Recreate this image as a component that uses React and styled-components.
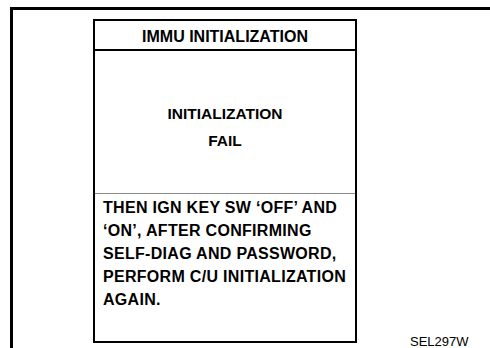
import React from "react";
import styled, { createGlobalStyle } from "styled-components";

const GlobalStyle = createGlobalStyle`
  html, body {
    margin: 0;
    padding: 0;
    background: #fff;
    overflow: hidden;
  }
  body {
    font-family: "Liberation Sans", Arial, sans-serif;
    color: #000;
  }
`;

const Frame = styled.div`
  box-sizing: border-box;
  margin: 7px 0 0 10px;
  height: 341px;
  border-top: 3px solid #000;
  border-left: 3px solid #000;
  display: flex;
  align-items: flex-start;
`;

const Screen = styled.div`
  box-sizing: border-box;
  margin: 9px 0 0 80px;
  width: 264px;
  height: 324px;
  border: 2px solid #000;
  display: flex;
  flex-direction: column;
`;

const Header = styled.div`
  height: 25px;
  padding-top: 3px;
  line-height: 25px;
  font-size: 16px;
  font-weight: bold;
  text-align: center;
  border-bottom: 2px solid #000;
`;

const Message = styled.div`
  box-sizing: border-box;
  height: 143px;
  padding-top: 49px;
  font-size: 15.5px;
  line-height: 27px;
  font-weight: bold;
  text-align: center;
  border-bottom: 1px solid #8a8a8a;
`;

const Instructions = styled.div`
  flex: 1;
  padding: 2px 0 0 8px;
  font-size: 16px;
  line-height: 23px;
  font-weight: bold;
  letter-spacing: 0.3px;
`;

const FigureCode = styled.div`
  align-self: flex-end;
  margin: 0 0 0 53px;
  font-size: 13px;
  line-height: 13px;
  white-space: nowrap;
`;

const instructions = [
  "THEN IGN KEY SW \u2018OFF\u2019 AND",
  "\u2018ON\u2019, AFTER CONFIRMING",
  "SELF-DIAG AND PASSWORD,",
  "PERFORM C/U INITIALIZATION",
  "AGAIN.",
];

export default function App() {
  return (
    <>
      <GlobalStyle />
      <Frame>
        <Screen>
          <Header>IMMU INITIALIZATION</Header>
          <Message>
            INITIALIZATION
            <br />
            FAIL
          </Message>
          <Instructions>
            {instructions.map((line) => (
              <div key={line}>{line}</div>
            ))}
          </Instructions>
        </Screen>
        <FigureCode>SEL297W</FigureCode>
      </Frame>
    </>
  );
}
